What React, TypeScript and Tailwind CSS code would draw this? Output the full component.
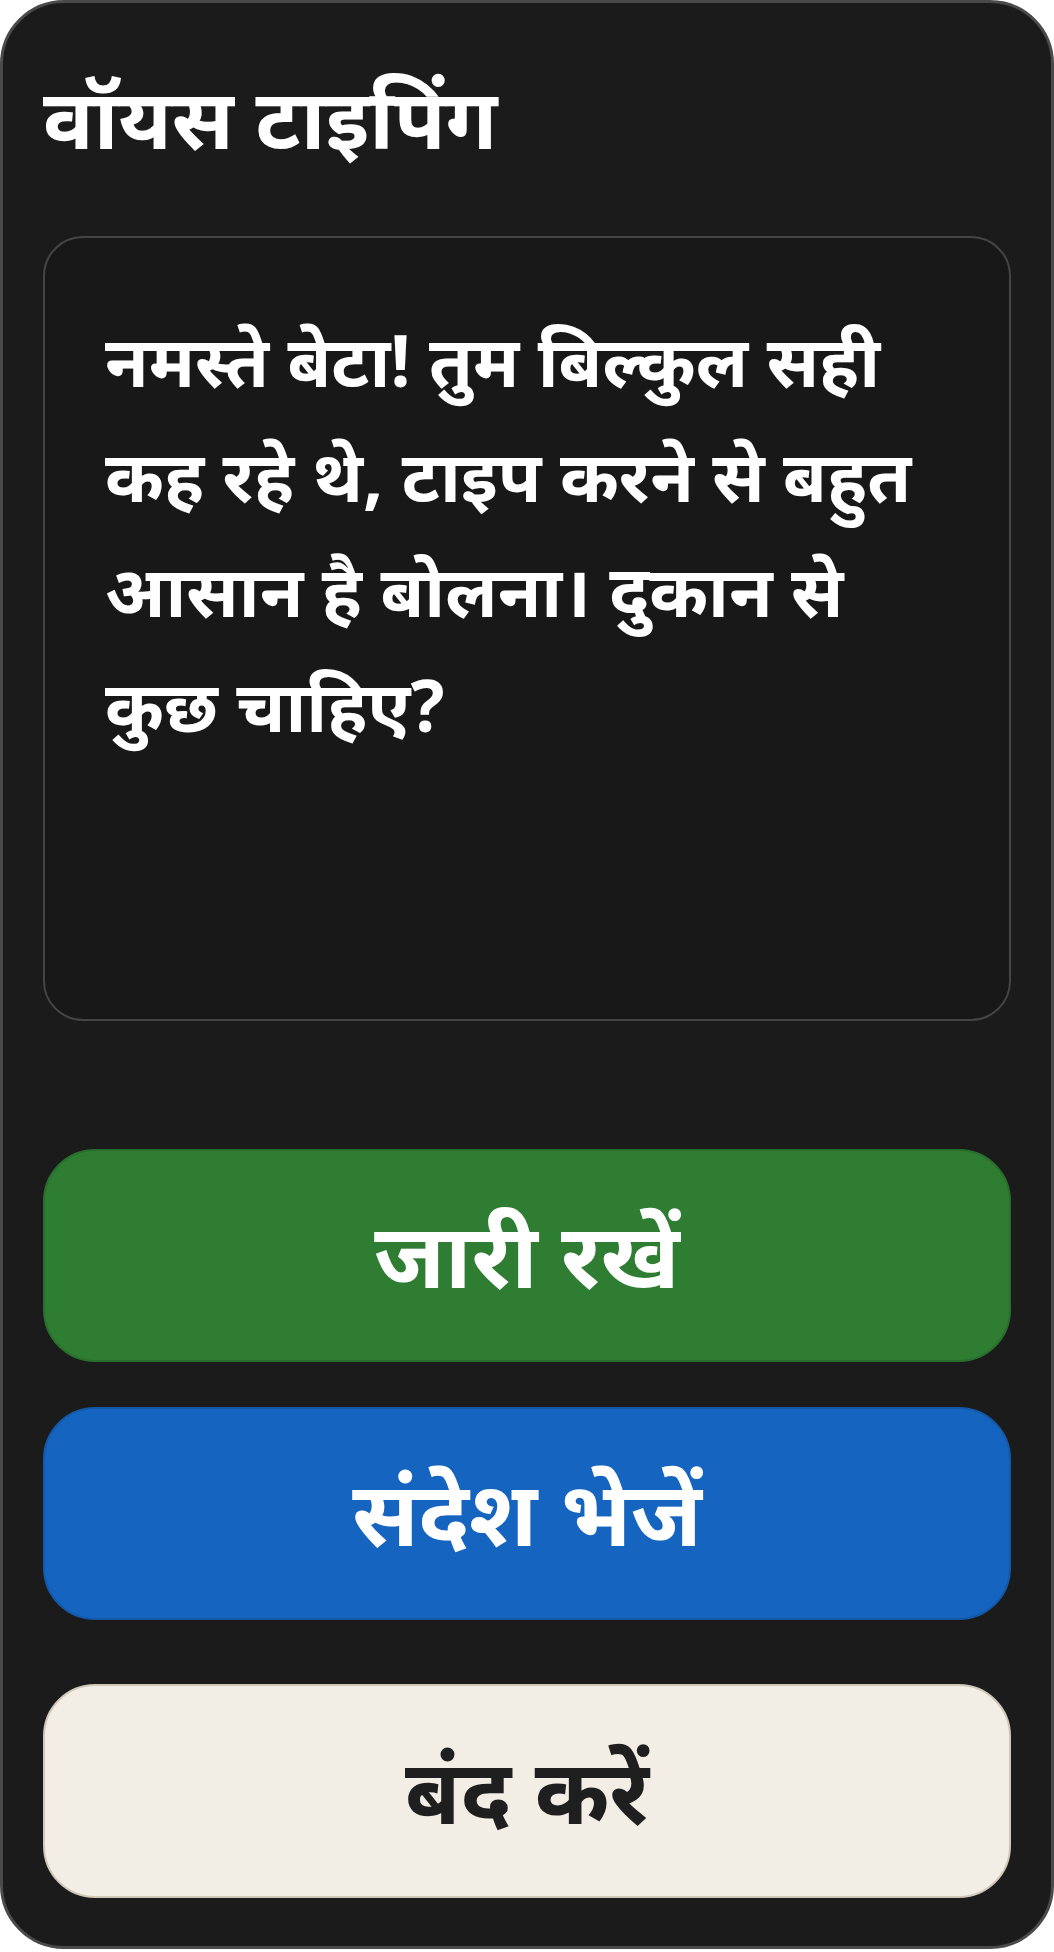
import React from "react";

export default function App() {
  const font = { fontFamily: '"Noto Sans", "Noto Sans Devanagari", sans-serif' };
  return (
    <div className="w-[1054px] h-[1952px] bg-white" style={font}>
      <div className="w-[1054px] h-[1949px] border-[3px] border-[#4a4a4a] rounded-[64px] bg-[#1b1b1b] px-10 pt-[64px] flex flex-col">
        <h1 className="text-[84px] font-bold text-white leading-[1.2] whitespace-nowrap">वॉयस टाइपिंग</h1>
        <div className="mt-[68px] h-[785px] shrink-0 bg-[#181818] border-2 border-[#454545] rounded-[40px] px-[60px] pt-[64px]">
          <p className="text-[71px] font-bold text-white leading-[115px]">
            नमस्ते बेटा! तुम बिल्कुल सही कह रहे थे, टाइप करने से बहुत आसान है बोलना। दुकान से कुछ चाहिए?
          </p>
        </div>
        <button className="mt-[128px] h-[213px] shrink-0 rounded-[52px] bg-[#2e7d32] border-2 border-[#2a6e2d] text-white text-[90px] font-bold leading-none pb-[4px]">
          जारी रखें
        </button>
        <button className="mt-[45px] h-[213px] shrink-0 rounded-[52px] bg-[#1565c0] border-2 border-[#1459a8] text-white text-[90px] font-bold leading-none pb-[4px]">
          संदेश भेजें
        </button>
        <button className="mt-[64px] h-[214px] shrink-0 rounded-[52px] bg-[#f2ede5] border-2 border-[#cfc7b8] text-[#1f1f1f] text-[90px] font-bold leading-none pb-[4px]">
          बंद करें
        </button>
      </div>
    </div>
  );
}
